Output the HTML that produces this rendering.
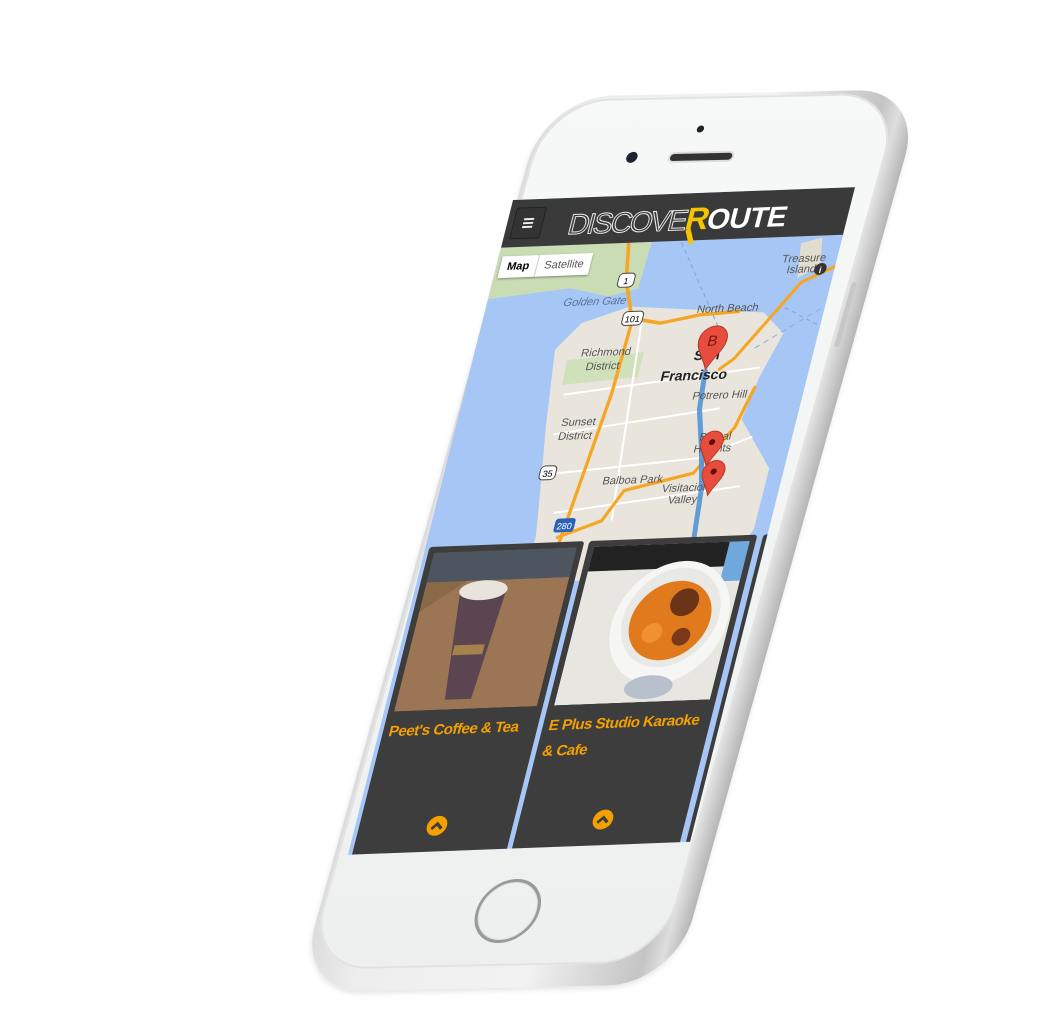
<!DOCTYPE html>
<html><head><meta charset="utf-8">
<style>
html,body{margin:0;padding:0;background:#fff;width:1048px;height:1033px;overflow:hidden;font-family:"Liberation Sans",sans-serif}
.world{position:absolute;left:0;top:0;width:0;height:0;transform-origin:0 0}
.pw{transform:matrix(1,-0.0213,-0.2788,1,548,100)}
.sw{transform:matrix(1.006,-0.038,-0.25,0.992,513,200)}
.body{position:absolute;left:-3px;top:-3px;width:378px;height:895px;border-radius:66px;background:linear-gradient(90deg,#dcdcdc 0%,#eeeeee 15%,#f2f2f2 60%,#c4c4c4 90%,#dedede 95%,#b5b5b5 100%);box-shadow:0 3px 5px rgba(0,0,0,.1)}
.face{position:absolute;left:0;top:0;width:355px;height:870px;border-radius:62px;background:linear-gradient(180deg,#f7f8f8,#eef0f0);box-shadow:inset 0 0 0 2px #e2e2e2}
.screen{position:absolute;left:0;top:0;width:340px;height:660px;overflow:hidden;background:#a6c6f5}
.hdr{position:absolute;left:0;top:0;width:340px;height:48px;background:#3a3a3a}
.burger{position:absolute;left:6px;top:8px;width:28px;height:30px;border:1px solid #222;background:#333;border-radius:2px}
.burger i{position:absolute;left:9px;width:10px;height:2px;background:#eee}
.logo{position:absolute;left:62px;top:8px;font-size:29px;letter-spacing:-1.5px;color:#fff;white-space:nowrap}
.logo .t{font-weight:normal;color:transparent;-webkit-text-stroke:1px #e8e8e8;letter-spacing:-2px}
.logo .r{color:#f5c400;font-weight:bold;font-size:32px}
.logo .b{font-weight:bold;letter-spacing:-0.5px}
.mapctl{position:absolute;left:4px;top:57px;height:22px;background:#fff;box-shadow:0 1px 2px rgba(0,0,0,.4);font-size:11px;display:flex}
.mapctl span{padding:4px 7px;line-height:14px}
.card{position:absolute;top:350px;height:320px;background:#3d3d3d;border-radius:3px}
.card .img{position:absolute;left:6px;top:6px;right:6px;height:160px;overflow:hidden}
.card .tt{position:absolute;left:6px;top:174px;right:4px;color:#f5a000;font-weight:bold;font-size:15px;line-height:26px;letter-spacing:-0.5px}
.chev{position:absolute;top:274px;width:20px;height:20px;border-radius:50%;background:#f5a000}
.lbl{font-family:"Liberation Sans",sans-serif;fill:#555;font-size:11px}
</style></head><body>
<div class="world pw">
  <div class="body"></div>
  <div class="face"></div>
  <div style="position:absolute;left:158px;top:29px;width:7px;height:7px;border-radius:50%;background:#222"></div>
  <div style="position:absolute;left:95px;top:54px;width:11px;height:11px;border-radius:50%;background:#1d2430"></div>
  <div style="position:absolute;left:139px;top:57px;width:62px;height:7px;border-radius:4px;background:#333;box-shadow:0 0 0 2px #ddd"></div>
  <div style="position:absolute;left:155px;top:783px;width:64px;height:64px;border-radius:50%;border:3px solid #9a9a9a;box-sizing:border-box;box-shadow:inset 0 0 0 1px #ddd"></div>
  <div style="position:absolute;left:357px;top:190px;width:5px;height:65px;border-radius:3px;background:#c7c7c7"></div>
</div>
<div class="world sw">
  <div class="screen">
    <svg width="340" height="660" style="position:absolute;left:0;top:0">
      <rect width="340" height="660" fill="#a6c6f5"/>
      <path d="M0,48 L150,48 L148,95 L120,102 L80,92 L40,96 L0,100 Z" fill="#c9dcb4"/>
      <path d="M80,154 L100,128 L144,113 L216,119 L280,124 L305,146 L292,190 L285,232 L325,283 L325,344 L305,390 L108,390 L108,343 L102,304 L90,230 Z" fill="#e9e5dc"/>
      <path d="M95,165 L170,160 L170,185 L96,190 Z" fill="#cfe0bb"/>
      <path d="M300,55 L320,50 L325,80 L305,90 Z" fill="#e3ddd0"/>
      <g stroke="#fff" stroke-width="2" fill="none">
        <path d="M100,200 L290,180"/><path d="M100,240 L260,220"/><path d="M110,280 L250,270 L300,250"/><path d="M160,130 L180,330"/><path d="M120,320 L300,300"/>
      </g>
      <g stroke="#f5a623" stroke-width="3.5" fill="none" stroke-linecap="round">
        <path d="M127,48 L134,86 L149,125 L179,131 L217,124 L255,122"/>
        <path d="M340,80 L310,95 L262,170 L250,180"/>
        <path d="M150,130 L148,200 L140,280 L132,360"/>
        <path d="M130,345 L170,330 L185,300 L250,285 L280,240 L290,200"/>
      </g>
      <path d="M236,180 L240,220 L252,260 L262,300 L268,360 L268,660" stroke="#4a8fd6" stroke-width="5" fill="none" opacity=".85"/>
      <g stroke="#7ea9e8" stroke-width="1" stroke-dasharray="5 4" fill="none">
        <path d="M180,50 L240,140"/><path d="M300,120 L340,140"/><path d="M280,160 L340,120"/>
      </g>
      <text class="lbl" x="108" y="110" style="fill:#5a7199;font-style:italic" text-anchor="middle">Golden Gate</text>
      <text class="lbl" x="243" y="122" text-anchor="middle">North Beach</text>
      <text class="lbl" x="132" y="162" text-anchor="middle" font-size="12">Richmond</text>
      <text class="lbl" x="132" y="176" text-anchor="middle" font-size="12">District</text>
      <text x="234" y="170" text-anchor="middle" font-size="14" font-weight="bold" fill="#222">San</text>
      <text x="226" y="190" text-anchor="middle" font-size="14" font-weight="bold" fill="#222">Francisco</text>
      <text class="lbl" x="257" y="210" text-anchor="middle">Potrero Hill</text>
      <text class="lbl" x="122" y="232" text-anchor="middle" font-size="12">Sunset</text>
      <text class="lbl" x="122" y="246" text-anchor="middle" font-size="12">District</text>
      <text class="lbl" x="263" y="252" text-anchor="middle">Bernal</text>
      <text class="lbl" x="263" y="264" text-anchor="middle">Heights</text>
      <text class="lbl" x="191" y="293" text-anchor="middle">Balboa Park</text>
      <text class="lbl" x="246" y="303" text-anchor="middle">Visitacion</text>
      <text class="lbl" x="246" y="315" text-anchor="middle">Valley</text>
      <text class="lbl" x="307" y="74" text-anchor="middle" font-size="10">Treasure</text>
      <text class="lbl" x="307" y="85" text-anchor="middle" font-size="10">Island</text>
      <circle cx="326" cy="82" r="6" fill="#333"/><text x="326" y="86" font-size="9" fill="#fff" text-anchor="middle" font-weight="bold">i</text>
      <rect x="126" y="79" width="16" height="14" rx="4" fill="#fff" stroke="#444"/><text x="134" y="90" font-size="9" text-anchor="middle">1</text>
      <rect x="140" y="118" width="20" height="14" rx="4" fill="#fff" stroke="#444"/><text x="150" y="129" font-size="9" text-anchor="middle">101</text>
      <rect x="96" y="272" width="16" height="14" rx="4" fill="#fff" stroke="#444"/><text x="104" y="283" font-size="9" text-anchor="middle">35</text>
      <rect x="124" y="326" width="20" height="14" rx="3" fill="#2a62b7"/><text x="134" y="337" font-size="9" fill="#fff" text-anchor="middle">280</text>
      <g fill="#e74c3c" stroke="#b03a2e" stroke-width="1">
        <path d="M236,180 C230,166 222,160 222,150 A14,14 0 1 1 250,150 C250,160 242,166 236,180Z"/>
        <path d="M261,278 C256,266 250,262 250,254 A11,11 0 1 1 272,254 C272,262 266,266 261,278Z"/>
        <path d="M270,308 C265,296 259,292 259,284 A11,11 0 1 1 281,284 C281,292 275,296 270,308Z"/>
      </g>
      <text x="236" y="156" font-size="15" text-anchor="middle" fill="#7a1a12">B</text>
      <circle cx="261" cy="254" r="3" fill="#5a0f0a"/><circle cx="270" cy="284" r="3" fill="#5a0f0a"/>
    </svg>
    <div class="hdr">
      <div class="burger"><i style="top:10px"></i><i style="top:14px"></i><i style="top:18px"></i></div>
      <div class="logo"><span class="t">DISCOVE</span><span class="r">R</span><span class="b">OUTE</span></div>
      <div style="position:absolute;left:184px;top:36px;width:5px;height:16px;background:#f5c400;transform:rotate(-25deg)"></div>
    </div>
    <div class="mapctl"><span style="font-weight:bold">Map</span><span style="border-left:1px solid #ccc;color:#555">Satellite</span></div>
    <div class="card" style="left:4px;width:154px">
      <div class="img">
        <svg width="142" height="160">
          <rect width="142" height="160" fill="#8a6848"/>
          <rect width="142" height="30" fill="#4c5560"/>
          <path d="M0,60 L40,30 L142,30 L142,160 L0,160Z" fill="#9b7554"/>
          <path d="M36,40 L82,40 L74,150 L48,150Z" fill="#5b4550"/>
          <ellipse cx="59" cy="40" rx="24" ry="10" fill="#e8e4dc"/>
          <rect x="44" y="95" width="30" height="10" fill="#c89b4a" opacity=".7"/>
        </svg>
      </div>
      <div class="tt">Peet's Coffee &amp; Tea</div>
      <div class="chev" style="left:68px"><svg width="20" height="20"><path d="M5,13 L10,8 L15,13" stroke="#3d3d3d" stroke-width="3" fill="none"/></svg></div>
    </div>
    <div class="card" style="left:163px;width:167px">
      <div class="img">
        <svg width="155" height="160">
          <rect width="155" height="160" fill="#e8e6e0"/>
          <rect width="155" height="25" fill="#222"/>
          <rect x="135" width="20" height="40" fill="#6fa8dc"/>
          <ellipse cx="95" cy="80" rx="58" ry="62" fill="#f6f6f4"/>
          <ellipse cx="95" cy="75" rx="48" ry="50" fill="#e8e8e4"/>
          <ellipse cx="95" cy="78" rx="40" ry="40" fill="#e07a1c"/>
          <circle cx="105" cy="60" r="14" fill="#6a3418"/><circle cx="80" cy="90" r="10" fill="#f09030"/><circle cx="110" cy="95" r="9" fill="#7a3a1a"/>
          <ellipse cx="90" cy="145" rx="24" ry="12" fill="#b8c0cc"/>
        </svg>
      </div>
      <div class="tt">E Plus Studio Karaoke &amp; Cafe</div>
      <div class="chev" style="left:74px"><svg width="20" height="20"><path d="M5,13 L10,8 L15,13" stroke="#3d3d3d" stroke-width="3" fill="none"/></svg></div>
    </div>
    <div class="card" style="left:336px;width:60px">
      <div class="img" style="background:#c0304a"></div>
      <div class="tt">T</div>
    </div>
  </div>
</div>
</body></html>
